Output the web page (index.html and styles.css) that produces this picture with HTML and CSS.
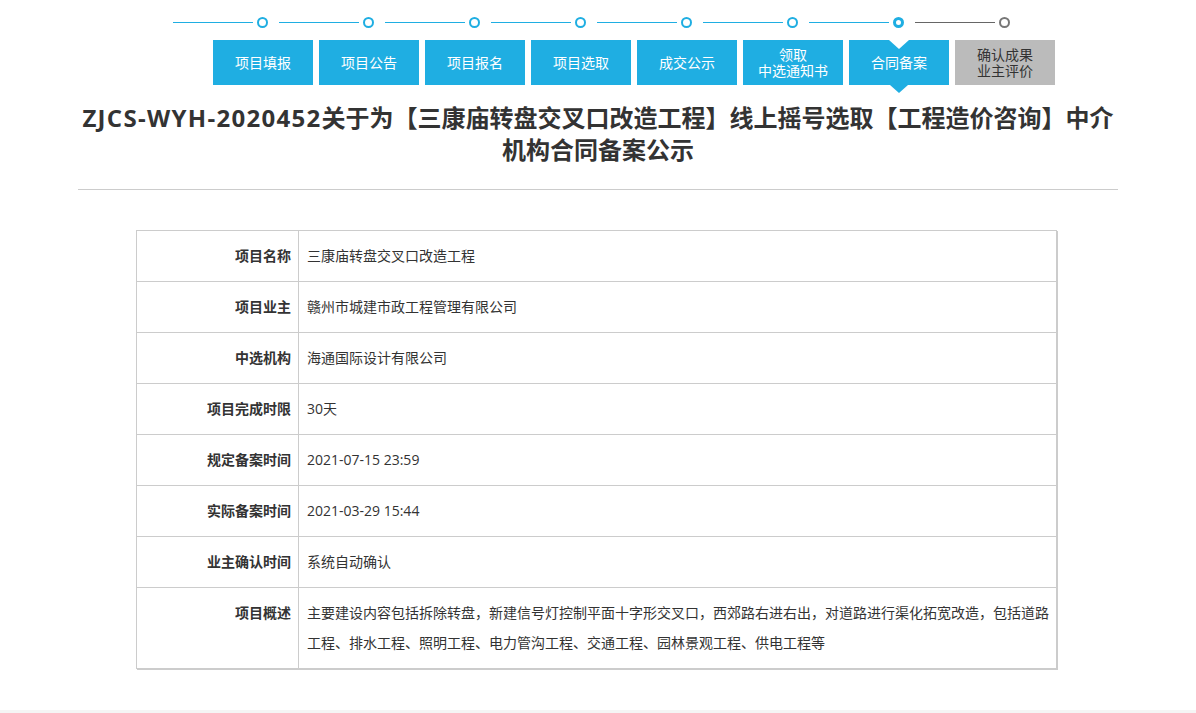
FILE: index.html
```html
<!DOCTYPE html>
<html lang="zh-CN">
<head>
<meta charset="utf-8">
<title>合同备案公示</title>
<link rel="stylesheet" href="styles.css">
</head>
<body>
<div class="page">
  <div class="steps">
    <div class="track">
      <div class="node"><span class="line"></span><span class="dot"></span></div>
      <div class="node"><span class="line"></span><span class="dot"></span></div>
      <div class="node"><span class="line"></span><span class="dot"></span></div>
      <div class="node"><span class="line"></span><span class="dot"></span></div>
      <div class="node"><span class="line"></span><span class="dot"></span></div>
      <div class="node"><span class="line"></span><span class="dot"></span></div>
      <div class="node current"><span class="line"></span><span class="dot"></span></div>
      <div class="node todo"><span class="line"></span><span class="dot"></span></div>
    </div>
    <div class="tabs">
      <div class="tab">项目填报</div>
      <div class="tab">项目公告</div>
      <div class="tab">项目报名</div>
      <div class="tab">项目选取</div>
      <div class="tab">成交公示</div>
      <div class="tab two">领取<br>中选通知书</div>
      <div class="tab active">合同备案</div>
      <div class="tab pending two">确认成果<br>业主评价</div>
    </div>
  </div>

  <h1 class="title"><span class="code">ZJCS-WYH-2020452</span>关于为【三康庙转盘交叉口改造工程】线上摇号选取【工程造价咨询】中介机构合同备案公示</h1>
  <div class="rule"></div>

  <table class="info">
    <colgroup><col class="c-label"><col></colgroup>
    <tbody>
      <tr><th>项目名称</th><td>三康庙转盘交叉口改造工程</td></tr>
      <tr><th>项目业主</th><td>赣州市城建市政工程管理有限公司</td></tr>
      <tr><th>中选机构</th><td>海通国际设计有限公司</td></tr>
      <tr><th>项目完成时限</th><td>30天</td></tr>
      <tr><th>规定备案时间</th><td>2021-07-15 23:59</td></tr>
      <tr><th>实际备案时间</th><td>2021-03-29 15:44</td></tr>
      <tr><th>业主确认时间</th><td>系统自动确认</td></tr>
      <tr><th>项目概述</th><td>主要建设内容包括拆除转盘，新建信号灯控制平面十字形交叉口，西郊路右进右出，对道路进行渠化拓宽改造，包括道路工程、排水工程、照明工程、电力管沟工程、交通工程、园林景观工程、供电工程等</td></tr>
    </tbody>
  </table>
</div>
<div class="footer"></div>
</body>
</html>
```

FILE: styles.css
```css
html, body {
  margin: 0;
  padding: 0;
  background: #fff;
}
body {
  font-family: "Open Sans", "Noto Sans CJK SC", sans-serif;
  color: #333;
}
.page {
  width: 1040px;
  margin: 0 auto;
}

/* steps */
.steps {
  padding-top: 17px;
}
.track {
  display: flex;
  padding-left: 95px;
  height: 11px;
}
.node {
  display: flex;
  align-items: center;
  width: 106px;
  flex: none;
}
.node .line {
  width: 80px;
  height: 1px;
  margin-right: 4px;
  background: #1faee2;
}
.node .dot {
  width: 11px;
  height: 11px;
  box-sizing: border-box;
  border: 2px solid #1faee2;
  border-radius: 50%;
  background: #fff;
}
.node.current .dot {
  border-width: 3px;
}
.node.todo .line {
  background: #666;
}
.node.todo .dot {
  border-color: #777;
}

.tabs {
  display: flex;
  gap: 6px;
  padding-left: 135px;
  margin-top: 12px;
}
.tab {
  position: relative;
  width: 100px;
  height: 45px;
  flex: none;
  display: flex;
  align-items: center;
  justify-content: center;
  text-align: center;
  background: #1faee2;
  color: #fff;
  font-size: 14px;
  line-height: 16px;
}
.tab.two {
  line-height: 16px;
}
.tab.pending {
  background: #bbb;
  color: #333;
}
.tab.active::before {
  content: "";
  position: absolute;
  top: 0;
  left: 40px;
  border-left: 10px solid transparent;
  border-right: 10px solid transparent;
  border-top: 9px solid #fff;
}
.tab.active::after {
  content: "";
  position: absolute;
  top: 45px;
  left: 41px;
  border-left: 9px solid transparent;
  border-right: 9px solid transparent;
  border-top: 8px solid #1faee2;
}

/* title */
.title {
  margin: 17px 0 0;
  font-size: 24px;
  line-height: 32px;
  font-weight: bold;
  text-align: center;
  color: #333;
}
.title .code {
  letter-spacing: 1.3px;
}
.rule {
  height: 1px;
  background: #ccc;
  margin-top: 23px;
}

/* table */
.info {
  width: 921px;
  margin: 40px 0 0 58px;
  border-collapse: collapse;
  table-layout: fixed;
  font-size: 14px;
  box-shadow: 1px 1px 0 #ccc;
}
.info .c-label {
  width: 162px;
}
.info th,
.info td {
  border: 1px solid #ccc;
  padding: 10px 4px 10px 8px;
  line-height: 30px;
  vertical-align: top;
  color: #333;
}
.info th {
  text-align: right;
  font-weight: bold;
  padding-right: 7px;
}
.info td {
  text-align: left;
  font-weight: normal;
}

.footer {
  margin-top: 41px;
  height: 3px;
  background: #f5f5f5;
}
```
